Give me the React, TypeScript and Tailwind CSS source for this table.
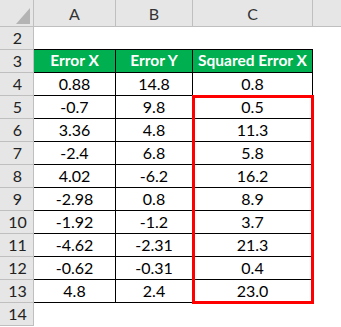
const rows: [string, string, string][] = [
  ["0.88", "14.8", "0.8"],
  ["-0.7", "9.8", "0.5"],
  ["3.36", "4.8", "11.3"],
  ["-2.4", "6.8", "5.8"],
  ["4.02", "-6.2", "16.2"],
  ["-2.98", "0.8", "8.9"],
  ["-1.92", "-1.2", "3.7"],
  ["-4.62", "-2.31", "21.3"],
  ["-0.62", "-0.31", "0.4"],
  ["4.8", "2.4", "23.0"],
];

function RowNum({ n }: { n: number }) {
  return (
    <div className="flex h-[23px] w-[34px] shrink-0 items-center justify-center border-r border-b border-[#bfbfbf] bg-[#e6e6e6] pl-[2px] text-[16px] text-[#222]">
      {n}
    </div>
  );
}

function Cell({ w, children, head }: { w: string; children?: React.ReactNode; head?: boolean }) {
  return (
    <div
      className={`flex h-[23px] shrink-0 items-center justify-center border-r border-b border-black ${w} ${
        head ? "bg-[#00b050] text-[15.5px] font-bold text-white" : "bg-white text-[16px] text-black"
      }`}
    >
      {children}
    </div>
  );
}

export default function App() {
  return (
    <div className="relative h-[327px] w-[341px] overflow-hidden bg-white font-['Lato','Open_Sans',sans-serif] leading-none">
      {/* column header */}
      <div className="flex h-[27px] border-b border-[#bfbfbf] bg-[#e6e6e6] text-[16px] text-[#333]">
        <div className="relative w-[34px] shrink-0 border-r border-[#bfbfbf]">
          <div className="absolute top-[8px] left-[16px] h-0 w-0 border-b-[16px] border-l-[14px] border-b-[#b4b4b4] border-l-transparent" />
        </div>
        <div className="flex w-[82px] shrink-0 items-center justify-center border-r border-[#bfbfbf] pt-[1px]">A</div>
        <div className="flex w-[77px] shrink-0 items-center justify-center border-r border-[#bfbfbf] pt-[1px]">B</div>
        <div className="flex w-[120px] shrink-0 items-center justify-center border-r border-[#bfbfbf] pt-[1px]">C</div>
        <div className="flex-1" />
      </div>

      {/* row 2 */}
      <div className="flex">
        <RowNum n={2} />
        <div className="h-[23px] w-[279px] shrink-0 border-b border-black" />
      </div>

      {/* row 3 headers */}
      <div className="flex">
        <RowNum n={3} />
        <Cell w="w-[82px]" head>Error X</Cell>
        <Cell w="w-[77px]" head>Error Y</Cell>
        <Cell w="w-[120px]" head>Squared Error X</Cell>
      </div>

      {rows.map((r, i) => (
        <div key={i} className="flex">
          <RowNum n={i + 4} />
          <Cell w="w-[82px]">{r[0]}</Cell>
          <Cell w="w-[77px]">{r[1]}</Cell>
          <Cell w="w-[120px]">{r[2]}</Cell>
        </div>
      ))}

      <div className="flex">
        <RowNum n={14} />
      </div>

      {/* highlight box */}
      <div className="absolute top-[95px] left-[192px] h-[209px] w-[122px] border-[3px] border-[#ff0000]" />
    </div>
  );
}
